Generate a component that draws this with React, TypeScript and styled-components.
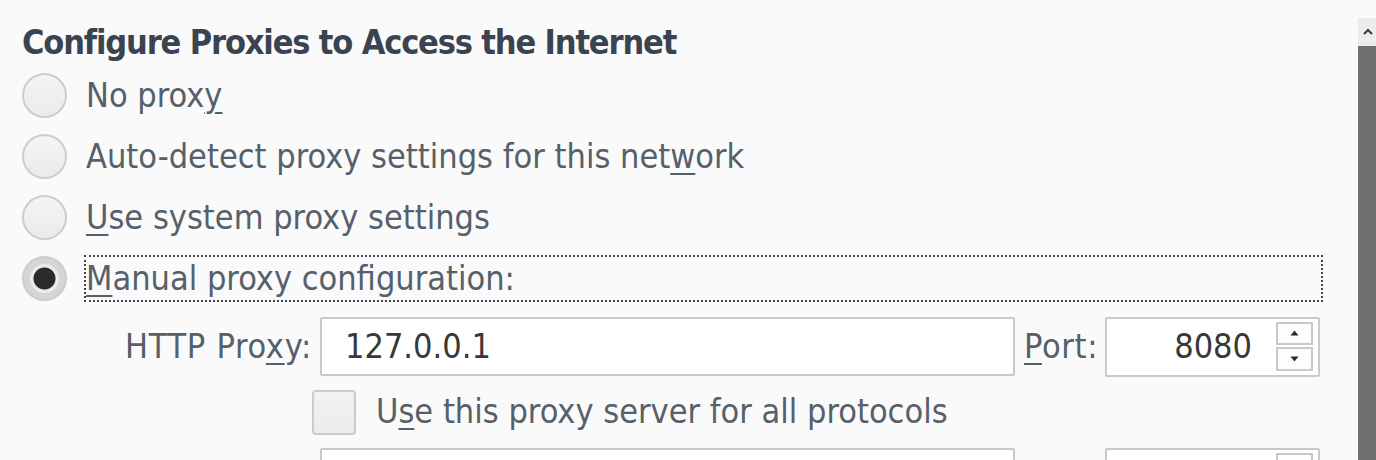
import React from "react";
import styled, { createGlobalStyle } from "styled-components";

const GlobalStyle = createGlobalStyle`
  html, body { margin: 0; padding: 0; background: #fafafa; }
  body {
    font-family: "DejaVu Sans Condensed", "DejaVu Sans", sans-serif;
    font-stretch: condensed;
    overflow: hidden;
  }
`;

const Page = styled.div`
  display: flex;
  width: 1376px;
  height: 460px;
  overflow: hidden;
  background: #fafafa;
`;

const Main = styled.div`
  flex: 1;
  min-width: 0;
  padding: 22px 35px 0 22px;
  box-sizing: border-box;
`;

const Heading = styled.h1`
  margin: 0 0 3px;
  font-size: 34px;
  line-height: 40px;
  font-weight: bold;
  letter-spacing: -1.15px;
  color: #3a4350;
  white-space: nowrap;
`;

const RadioRow = styled.div`
  display: flex;
  align-items: center;
  height: 61px;
`;

const RadioCircle = styled.span<{ $checked?: boolean }>`
  flex: none;
  width: 45px;
  height: 45px;
  box-sizing: border-box;
  border-radius: 50%;
  border: 2px solid #cdcdcd;
  background: ${(p) =>
    p.$checked
      ? "radial-gradient(circle, #2b2b2b 0 10.5px, #ebebeb 11.5px 14px, #d5d5d5 15px)"
      : "linear-gradient(#f4f4f4, #ebebeb)"};
  margin-right: 17px;
`;

const OptionLabel = styled.span<{ $focused?: boolean }>`
  display: flex;
  align-items: center;
  height: 47px;
  box-sizing: border-box;
  border: 2px dotted ${(p) => (p.$focused ? "#3c4450" : "transparent")};
  flex: ${(p) => (p.$focused ? "1" : "none")};
  padding: 0 2px 2px 0;
  font-size: 34px;
  line-height: 40px;
  color: #56606b;
  white-space: nowrap;
`;

const Key = styled.span`
  text-decoration: underline;
  text-decoration-thickness: 2px;
  text-underline-offset: 5px;
`;

const ProxyGrid = styled.div`
  display: grid;
  grid-template-columns: 226px 1fr 74px 215px;
  grid-template-rows: 59px 46px 59px;
  column-gap: 8px;
  row-gap: 13px;
  margin: 8px 3px 0 64px;
  align-items: center;
`;

const FieldLabel = styled.span`
  justify-self: end;
  font-size: 34px;
  line-height: 40px;
  letter-spacing: 0.7px;
  color: #56606b;
  white-space: nowrap;
  padding-bottom: 2px;
`;

const PortLabel = styled(FieldLabel)`
  justify-self: start;
  margin: 0 1px;
`;

const TextBox = styled.div`
  height: 59px;
  box-sizing: border-box;
  border: 2px solid #c9c9c9;
  border-radius: 2px;
  background: #ffffff;
  display: flex;
  align-items: center;
  padding: 0 0 2px 23px;
  font-size: 34px;
  color: #383838;
  white-space: nowrap;
`;

const PortBox = styled.div`
  height: 60px;
  box-sizing: border-box;
  border: 2px solid #c9c9c9;
  border-radius: 2px;
  background: #ffffff;
  display: flex;
  align-items: center;
  padding: 0 5px 0 0;
  font-size: 34px;
  color: #383838;
`;

const PortValue = styled.span`
  flex: 1;
  text-align: right;
  padding: 0 24px 2px 0;
`;

const Spinner = styled.div`
  display: flex;
  flex-direction: column;
  gap: 2px;
  width: 37px;
  align-self: stretch;
  padding: 3px 0 4px;
  box-sizing: border-box;
`;

const SpinButton = styled.div`
  flex: 1;
  border: 2px solid #c9c9c9;
  background: #fdfdfd;
  display: flex;
  align-items: center;
  justify-content: center;
`;

const CheckRow = styled.div`
  grid-column: 2 / 5;
  display: flex;
  align-items: center;
  margin-left: -8px;
`;

const CheckBox = styled.span`
  flex: none;
  width: 44px;
  height: 45px;
  box-sizing: border-box;
  border: 2px solid #cbcbcb;
  border-radius: 4px;
  background: linear-gradient(#f2f2f2, #ececec);
  margin-right: 20px;
`;

const CheckLabel = styled.span`
  font-size: 34px;
  line-height: 40px;
  color: #56606b;
  white-space: nowrap;
  padding-bottom: 2px;
`;

const Scrollbar = styled.div`
  flex: none;
  width: 18px;
  display: flex;
  flex-direction: column;
  padding-top: 18px;
`;

const ScrollButton = styled.div`
  height: 28px;
  background: #ececec;
  display: flex;
  align-items: center;
  padding-left: 5px;
`;

const ScrollThumb = styled.div`
  flex: 1;
  background: #707070;
`;

const Up = () => (
  <svg width="10" height="8" viewBox="0 0 10 8">
    <path d="M1 6 L5 2 L9 6" fill="none" stroke="#3a3a3a" strokeWidth="2" />
  </svg>
);

const Tri = ({ up }: { up?: boolean }) => (
  <svg width="9" height="6" viewBox="0 0 9 6">
    <path d={up ? "M0.5 5.5 L4.5 0.5 L8.5 5.5 Z" : "M0.5 0.5 L8.5 0.5 L4.5 5.5 Z"} fill="#2a2a2a" />
  </svg>
);

const PortField = ({ value }: { value?: string }) => (
  <PortBox>
    <PortValue>{value}</PortValue>
    <Spinner>
      <SpinButton>
        <Tri up />
      </SpinButton>
      <SpinButton>
        <Tri />
      </SpinButton>
    </Spinner>
  </PortBox>
);

export default function App() {
  return (
    <Page>
      <GlobalStyle />
      <Main>
        <Heading>Configure Proxies to Access the Internet</Heading>
        <RadioRow>
          <RadioCircle />
          <OptionLabel>
            No prox<Key>y</Key>
          </OptionLabel>
        </RadioRow>
        <RadioRow>
          <RadioCircle />
          <OptionLabel>
            Auto-detect proxy settings for this net<Key>w</Key>ork
          </OptionLabel>
        </RadioRow>
        <RadioRow>
          <RadioCircle />
          <OptionLabel>
            <Key>U</Key>se system proxy settings
          </OptionLabel>
        </RadioRow>
        <RadioRow>
          <RadioCircle $checked />
          <OptionLabel $focused>
            <Key>M</Key>anual proxy configuration:
          </OptionLabel>
        </RadioRow>
        <ProxyGrid>
          <FieldLabel>
            HTTP Pro<Key>x</Key>y:
          </FieldLabel>
          <TextBox>127.0.0.1</TextBox>
          <PortLabel>
            <Key>P</Key>ort:
          </PortLabel>
          <PortField value="8080" />
          <CheckRow>
            <CheckBox />
            <CheckLabel>
              U<Key>s</Key>e this proxy server for all protocols
            </CheckLabel>
          </CheckRow>
          <FieldLabel />
          <TextBox />
          <PortLabel />
          <PortField />
        </ProxyGrid>
      </Main>
      <Scrollbar>
        <ScrollButton>
          <Up />
        </ScrollButton>
        <ScrollThumb />
      </Scrollbar>
    </Page>
  );
}
